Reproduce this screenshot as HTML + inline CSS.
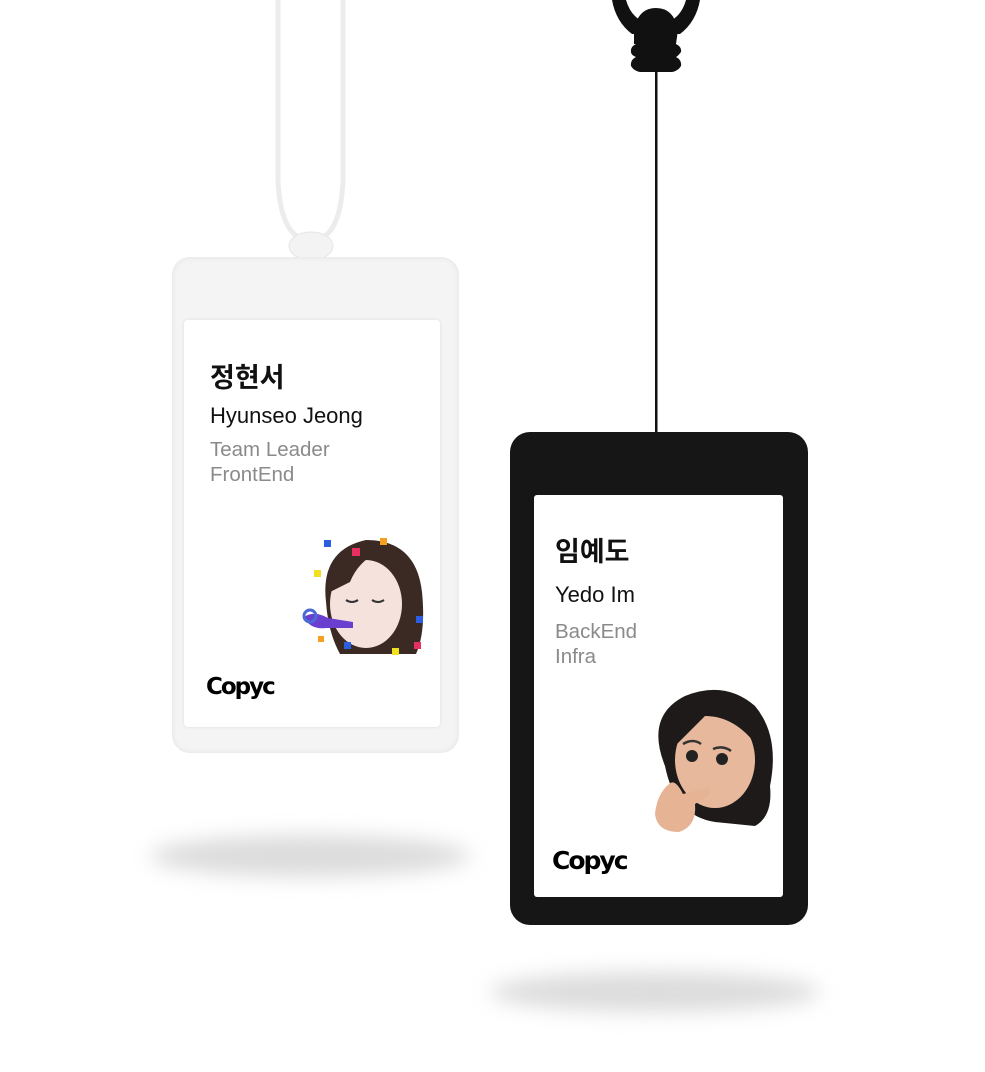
<!DOCTYPE html>
<html><head><meta charset="utf-8"><style>
html,body{margin:0;padding:0;background:#fff;}
body{width:985px;height:1072px;position:relative;overflow:hidden;font-family:"Liberation Sans","Noto Sans CJK KR",sans-serif;}
.abs{position:absolute;}
.t{position:absolute;white-space:nowrap;}
.ko{font-family:"Noto Sans CJK KR","NanumGothic",sans-serif;font-weight:700;font-size:27px;color:#111;}
.en{font-size:22px;color:#111;}
.g{font-size:20.5px;color:#8a8a8a;line-height:25px;}
.logo{font-family:"DejaVu Sans","Liberation Sans",sans-serif;font-weight:900;color:#000;letter-spacing:-2px;}
</style></head><body>
<!-- shadows -->
<div class="abs" style="left:150px;top:835px;width:320px;height:42px;border-radius:50%;background:#dcdcdc;filter:blur(10px);"></div>
<div class="abs" style="left:490px;top:972px;width:330px;height:40px;border-radius:50%;background:#dcdcdc;filter:blur(10px);"></div>

<svg class="abs" style="left:0;top:0" width="985" height="1072">
<path d="M278 0 L278 180 Q280 228 300 238" stroke="#ececec" stroke-width="5" fill="none"/>
<path d="M343 0 L343 180 Q341 228 322 238" stroke="#ececec" stroke-width="5" fill="none"/>
<ellipse cx="311" cy="246" rx="22" ry="14" fill="#f3f3f3" stroke="#e6e6e6"/>
<!-- black clip -->
<path d="M612 0 L626 0 Q630 14 640 20 L672 20 Q682 14 686 0 L700 0 Q696 22 680 34 L632 34 Q616 22 612 0Z" fill="#111"/>
<path d="M634 30 Q638 8 656 8 Q674 8 678 30 L676 44 L634 44Z" fill="#111"/>
<path d="M636 44 L676 44 Q682 47 681 52 Q678 56 676 57 Q682 60 681 66 Q678 71 672 72 L640 72 Q634 71 631 66 Q630 60 636 57 Q631 55 631 52 Q630 47 636 44Z" fill="#111"/>
<rect x="655" y="70" width="2.5" height="364" fill="#111"/>
</svg>

<!-- white holder -->
<div class="abs" style="left:172px;top:257px;width:287px;height:496px;border-radius:18px;background:#f4f4f4;box-shadow:inset 0 0 6px #e2e2e2;"></div>
<div class="abs" style="left:184px;top:320px;width:256px;height:407px;border-radius:4px;background:#fff;box-shadow:0 0 3px #ddd;"></div>
<div class="t ko" style="left:210px;top:356px;">정현서</div>
<div class="t en" style="left:210px;top:403px;">Hyunseo Jeong</div>
<div class="t g" style="left:210px;top:437px;">Team Leader<br>FrontEnd</div>
<svg class="abs" style="left:298px;top:532px" width="130" height="130">
<path d="M28 70 Q22 18 68 8 Q118 8 124 60 Q128 100 118 122 L42 122 Q30 100 28 70Z" fill="#3b2a24"/>
<ellipse cx="68" cy="72" rx="36" ry="44" fill="#f5e2dc"/>
<path d="M32 60 Q40 22 80 20 Q60 30 52 50Z" fill="#3b2a24"/>
<path d="M48 68 q6 4 12 0 M74 68 q6 4 12 0" stroke="#333" stroke-width="2" fill="none"/>
<path d="M6 85 Q16 78 30 86 L55 90 L55 96 L28 96 Q12 98 6 85Z" fill="#6a3fd0"/>
<circle cx="12" cy="84" r="6" fill="none" stroke="#4a6ad8" stroke-width="3"/>
<rect x="26" y="8" width="7" height="7" fill="#2b5fe0"/><rect x="54" y="16" width="8" height="8" fill="#e83060"/><rect x="82" y="6" width="7" height="7" fill="#f5a020"/>
<rect x="16" y="38" width="7" height="7" fill="#f0e020"/><rect x="118" y="84" width="7" height="7" fill="#2b5fe0"/><rect x="20" y="104" width="6" height="6" fill="#f5a020"/>
<rect x="46" y="110" width="7" height="7" fill="#2b5fe0"/><rect x="94" y="116" width="7" height="7" fill="#f0e020"/><rect x="116" y="110" width="7" height="7" fill="#e83060"/>
</svg>
<div class="t logo" style="left:206px;top:674px;font-size:23px;">Copyc</div>

<!-- black holder -->
<div class="abs" style="left:510px;top:432px;width:298px;height:493px;border-radius:20px;background:#161616;"></div>
<div class="abs" style="left:534px;top:495px;width:249px;height:402px;border-radius:3px;background:#fff;"></div>
<div class="t ko" style="left:555px;top:530px;">임예도</div>
<div class="t en" style="left:555px;top:582px;">Yedo Im</div>
<div class="t g" style="left:555px;top:619px;">BackEnd<br>Infra</div>
<svg class="abs" style="left:645px;top:686px" width="132" height="148">
<path d="M20 80 Q0 30 40 10 Q80 -6 110 20 Q135 50 125 100 Q128 130 110 140 L70 136 Q30 130 20 80Z" fill="#1e1a19"/>
<ellipse cx="70" cy="74" rx="40" ry="48" fill="#e8b89c"/>
<path d="M30 60 Q40 20 80 18 Q110 30 112 60 Q90 30 60 30Z" fill="#1e1a19"/>
<circle cx="47" cy="70" r="6" fill="#222"/><circle cx="77" cy="73" r="6" fill="#222"/>
<path d="M38 58 q10 -6 18 0 M68 63 q10 -4 18 2" stroke="#333" stroke-width="2.5" fill="none"/>
<path d="M24 98 Q30 92 38 108 L62 102 Q70 104 60 112 L50 118 Q52 140 34 146 Q12 146 10 128 Q12 108 24 98Z" fill="#e6b394"/>
</svg>
<div class="t logo" style="left:552px;top:846px;font-size:25px;">Copyc</div>
</body></html>
